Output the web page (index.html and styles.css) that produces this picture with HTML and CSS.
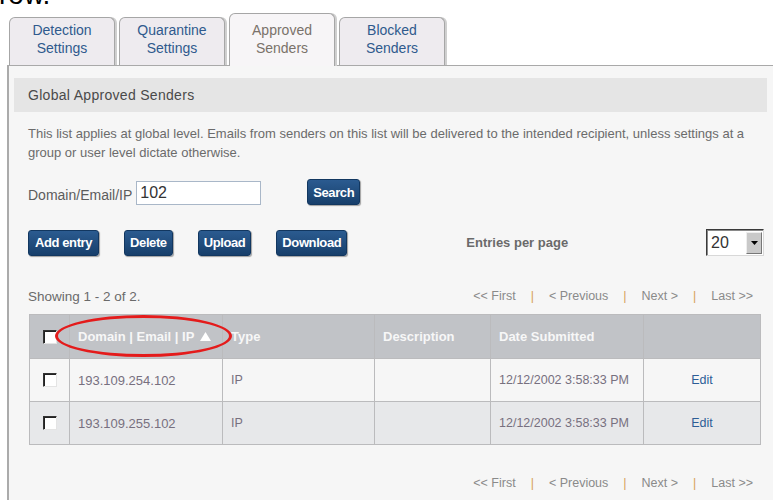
FILE: index.html
```html
<!DOCTYPE html>
<html lang="en">
<head>
<meta charset="utf-8">
<title>Approved Senders</title>
<link rel="stylesheet" href="styles.css">
</head>
<body>
<div class="lead">row.</div>

<nav class="tabs">
  <a class="tab">Detection<br>Settings</a>
  <a class="tab">Quarantine<br>Settings</a>
  <a class="tab active">Approved<br>Senders</a>
  <a class="tab">Blocked<br>Senders</a>
</nav>

<section class="panel">
  <h2 class="panel-title">Global Approved Senders</h2>
  <p class="intro">This list applies at global level. Emails from senders on this list will be delivered to the intended recipient, unless settings at a<br>group or user level dictate otherwise.</p>

  <form class="search-row">
    <label class="field-label" for="q">Domain/Email/IP</label>
    <input class="text-input" id="q" type="text" value="102">
    <button class="btn search" type="button">Search</button>
  </form>

  <div class="action-row">
    <button class="btn" type="button">Add entry</button>
    <button class="btn" type="button">Delete</button>
    <button class="btn" type="button">Upload</button>
    <button class="btn" type="button">Download</button>
    <span class="per-page-label">Entries per page</span>
    <div class="select">
      <span class="select-value">20</span>
      <span class="select-arrow"><svg width="7" height="4" viewBox="0 0 7 4"><path d="M0 0h7L3.5 4z" fill="#000"/></svg></span>
    </div>
  </div>

  <div class="list-bar">
    <span class="count">Showing 1 - 2 of 2.</span>
    <div class="pager">
      <a>&lt;&lt; First</a><span class="sep">|</span><a>&lt; Previous</a><span class="sep">|</span><a>Next &gt;</a><span class="sep">|</span><a>Last &gt;&gt;</a>
    </div>
  </div>

  <div class="table-wrap">
    <table class="grid">
      <colgroup>
        <col class="c-check"><col class="c-domain"><col class="c-type"><col class="c-desc"><col class="c-date"><col class="c-edit">
      </colgroup>
      <thead>
        <tr>
          <th class="check"><span class="box"></span></th>
          <th>Domain | Email | IP <svg class="sort" width="11" height="9" viewBox="0 0 11 9"><path d="M5.5 0L11 9H0z" fill="#fff"/></svg></th>
          <th>Type</th>
          <th>Description</th>
          <th>Date Submitted</th>
          <th></th>
        </tr>
      </thead>
      <tbody>
        <tr>
          <td class="check"><span class="box"></span></td>
          <td class="ip">193.109.254.102</td>
          <td>IP</td>
          <td></td>
          <td>12/12/2002 3:58:33 PM</td>
          <td class="edit"><a>Edit</a></td>
        </tr>
        <tr class="alt">
          <td class="check"><span class="box"></span></td>
          <td class="ip">193.109.255.102</td>
          <td>IP</td>
          <td></td>
          <td>12/12/2002 3:58:33 PM</td>
          <td class="edit"><a>Edit</a></td>
        </tr>
      </tbody>
    </table>
    <span class="sort-ring"></span>
  </div>

  <div class="list-bar end">
    <div class="pager">
      <a>&lt;&lt; First</a><span class="sep">|</span><a>&lt; Previous</a><span class="sep">|</span><a>Next &gt;</a><span class="sep">|</span><a>Last &gt;&gt;</a>
    </div>
  </div>
</section>
</body>
</html>
```
FILE: styles.css
```css
* { box-sizing: border-box; }

html, body {
  margin: 0;
  padding: 0;
  background: #fff;
  height: 100%;
  overflow: hidden;
  font-family: "Liberation Sans", Arial, sans-serif;
}

/* tail of the sentence above the screen */
.lead {
  margin-top: -19px;
  height: 28px;
  line-height: 28px;
  font-size: 28px;
  color: #000;
  margin-left: -1px;
}

/* tab strip */
.tabs {
  display: flex;
  align-items: flex-end;
  gap: 4px;
  margin-top: 4px;
  padding-left: 9px;
}

.tab {
  width: 106px;
  height: 48px;
  padding-top: 3px;
  border: 1px solid #a6a6a6;
  border-bottom: none;
  border-radius: 6px 6px 0 0;
  background: #eeebef;
  box-shadow: 2px 0 0 #cfcfcf;
  text-align: center;
  font-size: 14px;
  line-height: 18px;
  color: #2f5a8d;
}

.tab.active {
  height: 53px;
  padding-top: 7px;
  margin-bottom: -1px;
  background: #f7f5f7;
  color: #7a726a;
  position: relative;
  z-index: 1;
}

/* main panel */
.panel {
  margin-left: 7px;
  min-height: 440px;
  border-left: 2px solid #ababab;
  border-top: 1px solid #a9a9a9;
  background: #f6f6f6;
  padding: 12px 6px 0 5px;
}

.panel-title {
  margin: 0;
  height: 34px;
  line-height: 34px;
  padding-left: 14px;
  background: #e5e5e5;
  font-size: 14px;
  letter-spacing: 0.3px;
  font-weight: normal;
  color: #4a4a4a;
}

.intro {
  margin: 12px 0 0;
  padding: 0 6px 0 14px;
  font-size: 13px;
  line-height: 19px;
  color: #6b6b6b;
}

/* search */
.search-row {
  display: flex;
  align-items: flex-end;
  margin: 17px 0 0;
  padding-left: 14px;
}

.field-label {
  font-size: 14px;
  line-height: 20px;
  color: #5c5c5c;
}

.text-input {
  width: 125px;
  height: 24px;
  margin: 0 0 0 4px;
  padding: 0 3px;
  border: 1px solid #a9b7c8;
  background: #fff;
  font-family: inherit;
  font-size: 16px;
  color: #333;
  outline: none;
}

.btn {
  height: 26px;
  padding: 0 5px;
  border: 1px solid #123760;
  border-radius: 3px;
  background: linear-gradient(#2b5b90, #173f6b);
  box-shadow: 1px 1px 1px rgba(0, 0, 0, 0.35);
  font-family: inherit;
  font-size: 13px;
  font-weight: bold;
  letter-spacing: -0.4px;
  color: #fff;
  cursor: pointer;
}

.btn.search { margin-left: 46px; }

/* actions */
.action-row {
  display: flex;
  align-items: center;
  gap: 25px;
  margin-top: 24px;
  padding: 0 3px 0 14px;
}

.action-row .btn:first-child { padding: 0 6px; }

.per-page-label {
  margin-left: 94px;
  font-size: 13px;
  font-weight: bold;
  color: #6a6a6a;
}

.select {
  display: flex;
  width: 58px;
  height: 27px;
  margin-left: auto;
  border: 1px solid;
  border-color: #3a3a3a #d8d8d8 #d8d8d8 #3a3a3a;
  box-shadow: inset 1px 1px 0 #8a8a8a;
  background: #fff;
}

.select-value {
  flex: 1;
  padding: 2px 0 0 4px;
  font-size: 16px;
  line-height: 21px;
  color: #333;
}

.select-arrow {
  display: flex;
  align-items: center;
  justify-content: center;
  width: 16px;
  margin: 2px 1px 1px 0;
  background: #c9c9c9;
  border: 1px solid;
  border-color: #eee #777 #777 #eee;
}

/* paging bars */
.list-bar {
  display: flex;
  align-items: center;
  height: 20px;
  margin-top: 30px;
  padding: 0 14px;
  font-size: 12.5px;
  color: #888;
}

.list-bar.end {
  margin-top: 28px;
  justify-content: flex-end;
}

.count {
  font-size: 13.5px;
  color: #6a6a6a;
}

.pager {
  margin-left: auto;
  display: flex;
}

.pager a { color: #8a8a8a; }

.pager .sep {
  margin: 0 15px;
  color: #d7a25c;
}

/* results table */
.table-wrap {
  position: relative;
  margin: 8px 0 0 15px;
  width: 731px;
}

.grid {
  width: 731px;
  table-layout: fixed;
  border-collapse: collapse;
  font-size: 12.5px;
}

.c-check { width: 40px; }
.c-domain { width: 153px; }
.c-type { width: 152px; }
.c-desc { width: 116px; }
.c-date { width: 153px; }
.c-edit { width: 117px; }

.grid th,
.grid td {
  border: 1px solid #bbbbbd;
  padding: 0 0 0 8px;
  text-align: left;
  white-space: nowrap;
}

.grid th {
  height: 44px;
  background: #c1c3c7;
  color: #f7f7f7;
  font-size: 13px;
  font-weight: bold;
}

.grid td {
  height: 43px;
  background: #f6f6f6;
  color: #77707f;
}

.grid tr.alt td { background: #e7e8ea; }

.grid td.ip { font-size: 13px; }

.grid .check {
  padding: 0;
  text-align: center;
}

.grid td.edit {
  padding: 0;
  text-align: center;
}

.edit a { color: #2d5d96; }

.sort { margin-left: 2px; vertical-align: 0; }

.box {
  display: inline-block;
  width: 14px;
  height: 14px;
  vertical-align: middle;
  background: #fff;
  border: 1px solid;
  border-color: #333 #e4e4e4 #e4e4e4 #333;
  box-shadow: inset 1px 1px 0 #222;
}

/* red highlight round the sorted column heading */
.sort-ring {
  position: absolute;
  left: 26px;
  top: 1px;
  width: 177px;
  height: 42px;
  border: 3px solid #e41b1b;
  border-radius: 50%;
  pointer-events: none;
}
```
